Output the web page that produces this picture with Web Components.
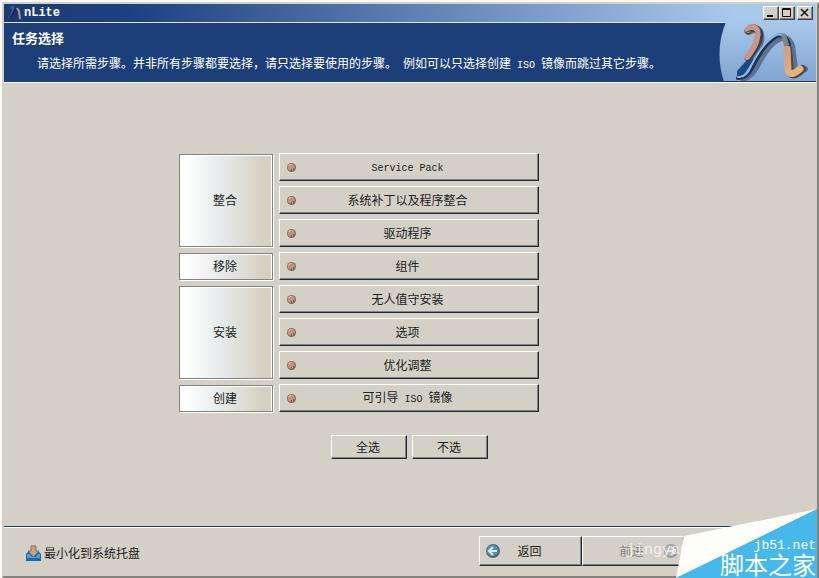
<!DOCTYPE html>
<html lang="zh-CN">
<head>
<meta charset="utf-8">
<title>nLite</title>
<style>
  body {
    margin: 0;
    background: #fbfbf6;
    color: #202020;
    font: 12px/16px "Noto Sans CJK SC", sans-serif;
    --face: #d5d0c7;
    --navy: #1c3f7a;
    --shade: #84827c;
    --dark: #1c2838;
  }
</style>
</head>
<body>
<nl-window>
  <nl-titlebar slot="title">nLite</nl-titlebar>
  <nl-banner slot="banner">
    <span slot="heading">任务选择</span>
    请选择所需步骤。并非所有步骤都要选择，请只选择要使用的步骤。<nl-latin> </nl-latin>例如可以只选择创建<nl-latin> ISO </nl-latin>镜像而跳过其它步骤。
  </nl-banner>

  <nl-tasks>
    <nl-group rows="3">整合</nl-group>
    <nl-task><nl-latin>Service Pack</nl-latin></nl-task>
    <nl-task>系统补丁以及程序整合</nl-task>
    <nl-task>驱动程序</nl-task>
    <nl-group rows="1">移除</nl-group>
    <nl-task>组件</nl-task>
    <nl-group rows="3">安装</nl-group>
    <nl-task>无人值守安装</nl-task>
    <nl-task>选项</nl-task>
    <nl-task>优化调整</nl-task>
    <nl-group rows="1">创建</nl-group>
    <nl-task>可引导<nl-latin> ISO </nl-latin>镜像</nl-task>
    <nl-button slot="actions">全选</nl-button>
    <nl-button slot="actions">不选</nl-button>
  </nl-tasks>

  <nl-footer slot="footer"></nl-footer>
  <nl-watermark slot="overlay"></nl-watermark>
</nl-window>

<script>
const define = (name, html, setup) => {
  const template = document.createElement('template');
  template.innerHTML = html.trim();
  customElements.define(name, class extends HTMLElement {
    constructor() {
      super();
      this.attachShadow({ mode: 'open' }).append(template.content.cloneNode(true));
    }
    connectedCallback() {
      if (setup) setup(this);
    }
  });
};

// Half-width latin text set next to the Chinese glyphs.
// No whitespace between style and slot: it would be kept by white-space: pre.
define('nl-latin', `
  <style>
    :host { font-family: "Liberation Mono", monospace; font-size: 10px; white-space: pre; }
  </style><slot></slot>
`);

define('nl-window', `
  <style>
    :host {
      display: flex;
      flex-direction: column;
      position: relative;
      box-sizing: border-box;
      min-height: 100vh;
      padding: 2px 0 0 2px;
    }
    .frame {
      flex: 1;
      display: flex;
      flex-direction: column;
      background: var(--face);
      border: solid;
      border-width: 2px;
      border-color: var(--face) var(--shade) var(--shade) var(--face);
      padding-right: 1px;
    }
    main { flex: 1; }
  </style>
  <div class="frame">
    <slot name="title"></slot>
    <slot name="banner"></slot>
    <main><slot></slot></main>
    <slot name="footer"></slot>
  </div>
  <slot name="overlay"></slot>
`);

define('nl-titlebar', `
  <style>
    :host {
      display: flex;
      align-items: center;
      height: 18px;
      padding: 0 3px;
      background: linear-gradient(90deg, #1b3a70, #1c4080 15%, #a8c8ec 90%);
      border-bottom: 1px solid #e6e2da;
      color: #fff;
      font: bold 12px/16px "Liberation Mono", monospace;
    }
    .name { flex: 1; }
    .controls { display: flex; }
    button {
      width: 16px;
      height: 14px;
      padding: 0;
      background: var(--face);
      border: 1px solid;
      border-color: #fff #404040 #404040 #fff;
      box-shadow: inset -1px -1px var(--shade);
    }
    button:last-child { margin-left: 2px; }
    svg { display: block; }
  </style>
  <svg width="17" height="16" viewBox="0 0 17 16" fill="none" stroke-width="2">
    <path d="M3 3l3-1v3l-2 5-2 3" stroke="#2f5f9e"/>
    <path d="M3 13l6-9" stroke="#152a50"/>
    <path d="M10 3l2 3 1 8" stroke="#b8958a"/>
  </svg>
  <span class="name"><slot></slot></span>
  <div class="controls">
    <button aria-label="最小化"><svg width="14" height="12"><path d="M3 8h6v2H3z" fill="#111"/></svg></button>
    <button aria-label="最大化"><svg width="14" height="12"><path d="M2.500 1.500h8v8h-8zM2 2.500h9" fill="none" stroke="#111"/></svg></button>
    <button aria-label="关闭"><svg width="14" height="12"><path d="M3 2l7 7M10 2l-7 7" stroke="#111" stroke-width="1.500"/></svg></button>
  </div>
`);

define('nl-banner', `
  <style>
    :host {
      display: flex;
      justify-content: space-between;
      height: 59px;
      background: var(--navy);
      border-bottom: 1px solid #fff;
      color: #fff;
    }
    .text { padding: 7px 8px; }
    h1 { margin: 0 0 9px; font-size: 13px; line-height: 16px; }
    p { margin: 0 0 0 25px; white-space: nowrap; }
    svg { flex: none; margin-top: -1px; }
  </style>
  <div class="text">
    <h1><slot name="heading"></slot></h1>
    <p><slot></slot></p>
  </div>
  <svg width="97" height="60" viewBox="0 -1 97 60" fill="none" stroke-linecap="round" stroke-linejoin="round">
    <defs>
      <linearGradient id="sky" x2="0" y2="1"><stop stop-color="#a8c8ea"/><stop offset="1" stop-color="#80a4d2"/></linearGradient>
      <linearGradient id="leg" gradientUnits="userSpaceOnUse" x1="64" x2="80" y1="30" y2="40"><stop stop-color="#cc9c88"/><stop offset="1" stop-color="#e2b47c"/></linearGradient>
    </defs>
    <path d="M7 -1Q-5 28 5 59H97V-1z" fill="url(#sky)"/>
    <g stroke="#5d7190">
      <path d="M31 8Q42 3 42 15Q42 22 31 37" stroke-width="7"/>
      <path d="M24 56Q32 54 38 43Q49 21 60 16Q69 12 73 23L76 45Q79 51 86 46" stroke-width="6"/>
      <path d="M72 25L73 50Q77 54 84 46" stroke-width="7"/>
    </g>
    <path d="M29 8C32 2 43 4 40 17Q38 24 29 35" stroke="#384050" stroke-width="7"/>
    <path d="M29 7C32 1 41 4 38 15Q37 23 28 34" stroke="#c69889" stroke-width="6"/>
    <path d="M28 9Q33 6 36 9" stroke="#3a3638" stroke-width="1"/>
    <path d="M28 37L36 35L24 53L18 53L18 48z" fill="#1c4684"/>
    <path d="M19 55Q27 56 33 45Q45 20 58 13Q67 10 70 22" stroke="#1b3155" stroke-width="4"/>
    <path d="M19 54Q27 55 32 43Q44 19 57 12Q64 10 67 18" stroke="#8fb8e4" stroke-width="2"/>
    <path d="M65 13L68 24" stroke="#7d8588" stroke-width="5"/>
    <path d="M69 26L71 49Q74 55 83 46" stroke="#4c4748" stroke-width="8"/>
    <path d="M68 26L69 48Q72 54 81 46" stroke="url(#leg)" stroke-width="7"/>
    <path d="M0 58.500H97" stroke="#1c3560"/>
  </svg>
`);

define('nl-tasks', `
  <style>
    :host { display: block; padding: 70px 0 20px 175px; }
    .grid {
      display: grid;
      grid-template-columns: 94px minmax(200px, 260px);
      grid-auto-rows: 28px;
      gap: 5px 6px;
    }
    .actions { display: flex; gap: 5px; padding: 23px 0 0 152px; }
  </style>
  <div class="grid"><slot></slot></div>
  <div class="actions"><slot name="actions"></slot></div>
`);

define('nl-group', `
  <style>
    :host {
      display: flex;
      align-items: center;
      justify-content: center;
      grid-column: 1;
      box-sizing: border-box;
      margin-top: 1px;
      padding: 0 2px 1px 0;
      border: 1px solid var(--shade);
      box-shadow: 1px 1px #fff, inset 0 1px #fff, inset -1px 0 #fff;
      background: linear-gradient(90deg, #fff 5%, #e6eaea 45%, #d6d0c4 90%);
    }
  </style>
  <slot></slot>
`, el => { el.style.gridRow = `span ${el.getAttribute('rows')}`; });

define('nl-task', `
  <style>
    :host { display: grid; grid-column: 2; }
    button {
      display: flex;
      align-items: center;
      padding: 0 6px;
      background: var(--face);
      border: 1px solid;
      border-color: #fff var(--dark) var(--dark) #fff;
      box-shadow: inset -1px -1px var(--shade);
      color: inherit;
      font: inherit;
    }
    .label { flex: 1; padding-right: 14px; }
  </style>
  <button>
    <svg width="11" height="11" viewBox="0 0 11 11">
      <circle cx="5.500" cy="5.500" r="4.500" fill="#756860"/>
      <circle cx="5.200" cy="5.200" r="3.600" fill="#c29182"/>
      <path d="M3 4l2-2" stroke="#edc49c"/>
      <path d="M5 8h1M7 7h1" stroke="#4a3029"/>
    </svg>
    <span class="label"><slot></slot></span>
  </button>
`);

define('nl-button', `
  <style>
    :host { display: grid; width: 76px; height: 24px; }
    button {
      padding: 0 2px 1px 0;
      background: var(--face);
      border: 1px solid;
      border-color: #fff var(--dark) var(--dark) #fff;
      box-shadow: inset -1px -1px var(--shade);
      color: inherit;
      font: inherit;
    }
  </style>
  <button><slot></slot></button>
`);

define('nl-footer', `
  <style>
    :host {
      display: flex;
      align-items: start;
      justify-content: space-between;
      height: 40px;
      padding: 9px 131px 0 21px;
      border-top: 1px solid var(--navy);
      box-shadow: inset 0 1px #fff;
    }
    button { color: inherit; font: inherit; background: none; padding: 0; border: 0; }
    .tray { display: flex; align-items: center; gap: 2px; height: 34px; }
    .nav { display: flex; }
    .nav button {
      display: flex;
      align-items: center;
      width: 103px;
      height: 30px;
      padding: 0 5px;
      border: 1px solid;
      border-color: #fff var(--dark) var(--dark) #fff;
      box-shadow: inset -1px -1px var(--shade);
    }
    .nav span { flex: 1; }
    .nav .back span { padding-right: 18px; }
    .nav .next span { padding-left: 12px; }
    .nav .next { color: #84827c; }
    .next svg { opacity: .6; }
  </style>
  <button class="tray">
    <svg width="17" height="17" viewBox="0 0 17 17">
      <path d="M1 9l3-3h9l3 3v7H1z" fill="#2463a8"/>
      <path d="M2 9h3l2 3h4l2-3h2v4H2z" fill="#38a8e8"/>
      <path d="M6 1h5v5h3l-5.500 6L3 6h3z" fill="#c9a084" stroke="#77706a"/>
    </svg>
    <span>最小化到系统托盘</span>
  </button>
  <div class="nav">
    <button class="back">
      <svg width="16" height="16" viewBox="0 0 16 16">
        <circle cx="8" cy="8" r="7" fill="#5b6670"/>
        <circle cx="7.500" cy="7.500" r="5.500" fill="#4795c2"/>
        <path d="M12 8H5M8 4L4 8l4 4" fill="none" stroke="#e9e6dc" stroke-width="2"/>
      </svg>
      <span>返回</span>
    </button>
    <button class="next" disabled>
      <span>前进</span>
      <svg width="16" height="16" viewBox="0 0 16 16">
        <circle cx="8" cy="8" r="7" fill="#77777c"/>
        <circle cx="7.500" cy="7.500" r="5.500" fill="#9ca4b8"/>
        <path d="M4 8h7M8 4l4 4-4 4" fill="none" stroke="#eee" stroke-width="2"/>
      </svg>
    </button>
  </div>
`);

define('nl-watermark', `
  <style>
    :host {
      position: absolute;
      right: 2px;
      bottom: 0;
      width: 141px;
      height: 69px;
      color: #fff;
      pointer-events: none;
    }
    .faint {
      position: absolute;
      right: 128px;
      bottom: 18px;
      font: 15px/18px "Liberation Mono", monospace;
      opacity: .7;
    }
    svg { position: absolute; inset: 0; }
    .site {
      position: absolute;
      right: 1px;
      bottom: 3px;
      text-align: right;
      white-space: nowrap;
      font-size: 24px;
      line-height: 22px;
    }
    .site small { display: block; font: 13px/14px "Liberation Mono", monospace; }
  </style>
  <span class="faint">jingyan</span>
  <svg width="141" height="69">
    <path d="M0 69L8 27 141 0z" fill="#fdfdfa"/>
    <path d="M0 69L141 0v69z" fill="#46b8ea"/>
  </svg>
  <div class="site"><small>jb51.net</small>脚本之家</div>
`);
</script>
</body>
</html>
